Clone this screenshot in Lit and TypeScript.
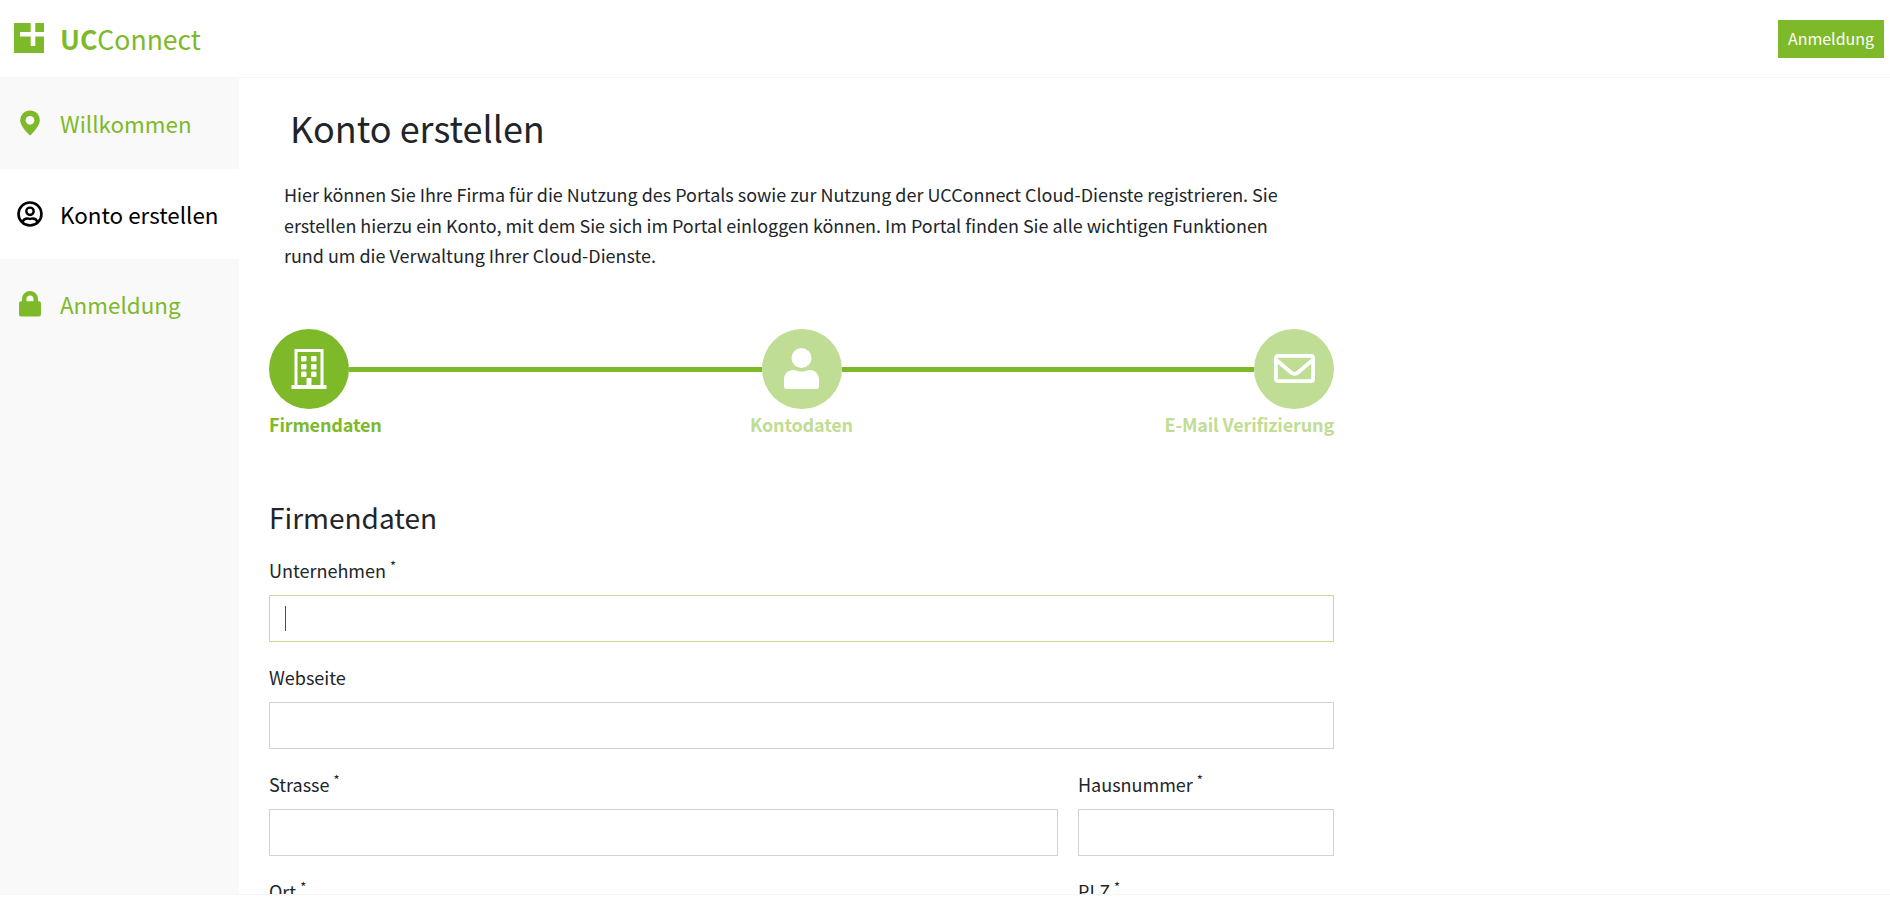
import { css, html, LitElement, svg } from "lit";
import { customElement } from "lit/decorators.js";

const pin = svg`<path d="M12 .5c-5 0-9 3.900-9 8.900 0 5.300 5.800 11 9 14.100 3.200-3.100 9-8.800 9-14.100 0-5-4-8.900-9-8.900z" fill="currentColor"/><circle cx="12" cy="9.500" r="4" fill="#f9f9f9"/>`;
const user = svg`<circle cx="12" cy="12" r="10.600" fill="none" stroke="currentColor" stroke-width="2.400"/><circle cx="12" cy="9.500" r="3.400" fill="none" stroke="currentColor" stroke-width="2.200"/><path d="M5 19.500c1-2.600 3-3.400 4.500-3.400 1 0 1.500.5 2.500.5s1.500-.5 2.500-.5c1.500 0 3.500.8 4.500 3.400" fill="none" stroke="currentColor" stroke-width="2.200"/>`;
const lock = svg`<path d="M4.600 9.500V7.400a7.400 7.400 0 0 1 14.800 0v2.100h.750a2 2 0 0 1 2 2v10a2 2 0 0 1-2 2H3.850a2 2 0 0 1-2-2v-10a2 2 0 0 1 2-2zm4.150 0h6.500V7.400a3.250 3.250 0 0 0-6.500 0z" fill="currentColor" fill-rule="evenodd"/>`;

const building = svg`<path d="M5 1.500h26v36.500H5z" fill="none" stroke="#fff" stroke-width="3"/><path d="M.5 36h35v4H.5z" fill="#fff"/><path d="M15.500 29h5v8h-5z" fill="#fff"/><g fill="#fff"><rect x="10" y="7" width="5.500" height="5.500" rx="1.200"/><rect x="20" y="7" width="5.500" height="5.500" rx="1.200"/><rect x="10" y="15" width="5.500" height="5.500" rx="1.200"/><rect x="20" y="15" width="5.500" height="5.500" rx="1.200"/><rect x="10" y="22.500" width="5.500" height="5.500" rx="1.200"/><rect x="20" y="22.500" width="5.500" height="5.500" rx="1.200"/></g>`;
const person = svg`<circle cx="17.500" cy="10" r="10" fill="#fff"/><path d="M9 22c2.500 0 4 1.500 8.500 1.500S23.500 22 26 22c5 0 9 4 9 9.500v7a2.500 2.500 0 0 1-2.500 2.500h-30A2.500 2.500 0 0 1 0 38.500v-7C0 26 4 22 9 22z" fill="#fff"/>`;
const mail = svg`<rect x="1.900" y="1.900" width="37.200" height="25.200" rx="2" fill="none" stroke="#fff" stroke-width="3.800"/><path d="M3 6.500 17 18.500c2 1.700 5 1.700 7 0L38 6.500" fill="none" stroke="#fff" stroke-width="3.800"/>`;

@customElement("app-root")
export class AppRoot extends LitElement {
  render() {
    return html`
      <header class="top">
        <a class="brand">
          <svg class="logo" viewBox="0 0 30 30">
            <rect width="30" height="30" fill="#7eb929" />
            <path d="M6 9h10.700V0h4.600v9H30v4.600h-8.700V23h-4.600v-9.400H6z" fill="#fff" />
          </svg>
          <span><b>UC</b>Connect</span>
        </a>
        <button class="login">Anmeldung</button>
      </header>
      <div class="body">
        <nav class="side">
          <a class="item">
            <svg class="ico" viewBox="0 0 24 24">${pin}</svg>Willkommen
          </a>
          <a class="item active">
            <svg class="ico" viewBox="0 0 24 24">${user}</svg>Konto erstellen
          </a>
          <a class="item">
            <svg class="ico" viewBox="0 0 24 24">${lock}</svg>Anmeldung
          </a>
        </nav>
        <main class="main">
          <h1>Konto erstellen</h1>
          <p class="intro">
            Hier können Sie Ihre Firma für die Nutzung des Portals sowie zur
            Nutzung der UCConnect Cloud-Dienste registrieren. Sie erstellen
            hierzu ein Konto, mit dem Sie sich im Portal einloggen können. Im
            Portal finden Sie alle wichtigen Funktionen rund um die Verwaltung
            Ihrer Cloud-Dienste.
          </p>
          <section class="form">
            <div class="steps">
              <div class="step">
                <div class="circle">
                  <svg width="36" height="40" viewBox="0 0 36 40">${building}</svg>
                </div>
                <span class="step-label">Firmendaten</span>
              </div>
              <div class="bar"></div>
              <div class="step off">
                <div class="circle">
                  <svg width="35" height="41" viewBox="0 0 35 41">${person}</svg>
                </div>
                <span class="step-label">Kontodaten</span>
              </div>
              <div class="bar"></div>
              <div class="step off">
                <div class="circle">
                  <svg width="41" height="29" viewBox="0 0 41 29">${mail}</svg>
                </div>
                <span class="step-label">E-Mail Verifizierung</span>
              </div>
            </div>
            <h2>Firmendaten</h2>
            <div class="field">
              <label>Unternehmen <sup>*</sup></label>
              <div class="input focus"><i class="caret"></i></div>
            </div>
            <div class="field">
              <label>Webseite</label>
              <div class="input"></div>
            </div>
            <div class="row">
              <div class="field grow">
                <label>Strasse <sup>*</sup></label>
                <div class="input"></div>
              </div>
              <div class="field small">
                <label>Hausnummer <sup>*</sup></label>
                <div class="input"></div>
              </div>
            </div>
            <div class="row">
              <div class="field grow">
                <label>Ort <sup>*</sup></label>
                <div class="input"></div>
              </div>
              <div class="field small">
                <label>PLZ <sup>*</sup></label>
                <div class="input"></div>
              </div>
            </div>
          </section>
        </main>
      </div>
      <div class="edge"></div>
    `;
  }

  static styles = css`
    :host {
      display: block;
      position: relative;
      height: 897px;
      overflow: hidden;
      background: #fff;
      color: #212529;
      font-family: "Noto Sans CJK SC", "Noto Sans", sans-serif;
    }

    .top {
      height: 78px;
      box-sizing: border-box;
      display: flex;
      align-items: center;
      justify-content: space-between;
      padding: 0 6px 0 14px;
      border-bottom: 1px solid #f5f5f5;
    }

    .brand {
      display: flex;
      align-items: center;
      gap: 16px;
      color: #7eb929;
      font-size: 26.600px;
      line-height: 40px;
    }

    .brand b {
      font-weight: 700;
    }

    .logo {
      width: 30px;
      height: 30px;
      margin-top: -1px;
    }

    .login {
      width: 106px;
      height: 38px;
      border: 0;
      background: #7eb929;
      color: #fff;
      font: inherit;
      font-size: 16px;
      padding: 0 0 2px;
      margin-top: 1px;
    }

    .body {
      display: flex;
    }

    .side {
      width: 239px;
      height: 819px;
      background: #f9f9f9;
      flex: none;
    }

    .item {
      display: flex;
      align-items: center;
      height: 90.500px;
      padding-left: 17px;
      gap: 17px;
      color: #7eb929;
      font-size: 22.400px;
    }

    .active {
      background: #fff;
      color: #000;
    }

    .ico {
      width: 26px;
      height: 26px;
      flex: none;
    }

    .main {
      padding-left: 30px;
      flex: 1;
      min-width: 0;
    }

    h1 {
      margin: 25px 0 0 21px;
      font-size: 36px;
      line-height: 48px;
      font-weight: 400;
    }

    .intro {
      margin: 28px 0 0 15px;
      width: 1010px;
      font-size: 17.950px;
      line-height: 30.600px;
    }

    .form {
      width: 1065px;
    }

    .steps {
      display: flex;
      align-items: flex-start;
      justify-content: space-between;
      margin-top: 58px;
    }

    .step {
      width: 80px;
      display: flex;
      flex-direction: column;
      align-items: center;
      flex: none;
    }

    .step:first-child .step-label {
      align-self: flex-start;
    }

    .step:last-child .step-label {
      align-self: flex-end;
    }

    .circle {
      width: 80px;
      height: 80px;
      border-radius: 50%;
      background: #7eb929;
      display: flex;
      align-items: center;
      justify-content: center;
    }

    .off .circle {
      background: #bfdd94;
    }

    .step-label {
      margin-top: 2px;
      white-space: nowrap;
      font-size: 18px;
      line-height: 26px;
      font-weight: 700;
      letter-spacing: -0.15px;
      color: #7eb929;
    }

    .off .step-label {
      color: #bfdd94;
    }

    .bar {
      flex: 1;
      height: 5px;
      margin-top: 38px;
      background: #7eb929;
    }

    h2 {
      margin: 62px 0 0;
      font-size: 28px;
      line-height: 36px;
      font-weight: 400;
    }

    .field {
      margin-top: 23px;
    }

    label {
      display: block;
      font-size: 18px;
      line-height: 24px;
      margin-bottom: 13px;
    }

    sup {
      font-size: 13px;
      line-height: 0;
    }

    .input {
      box-sizing: border-box;
      height: 47px;
      border: 1px solid #ced4da;
      display: flex;
      align-items: center;
      padding-left: 15px;
    }

    .focus {
      border-color: #bfdd94;
    }

    .caret {
      width: 1px;
      height: 25px;
      background: #495057;
    }

    .row {
      display: flex;
      gap: 20px;
    }

    .grow {
      flex: 1;
    }

    .small {
      width: 256px;
    }

    .edge {
      position: absolute;
      left: 0;
      right: 0;
      bottom: 0;
      box-sizing: border-box;
      height: 3px;
      background: #fff;
      border-top: 1px solid #f5f5f5;
    }
  `;
}
